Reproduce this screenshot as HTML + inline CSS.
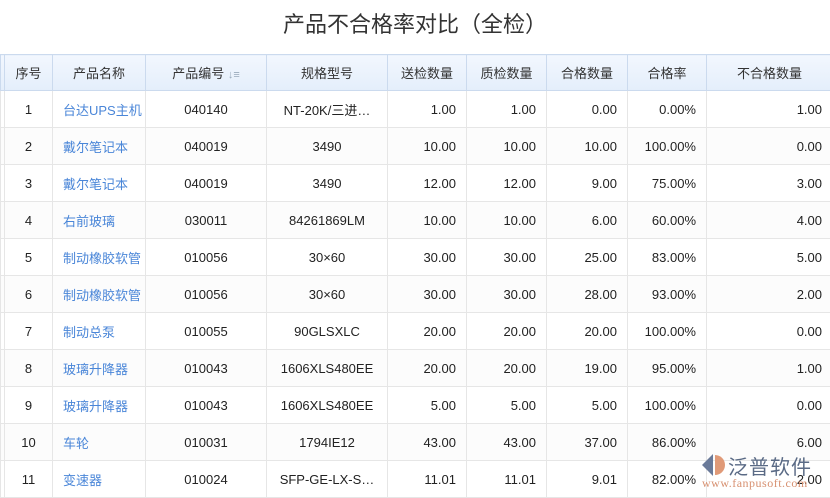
<!DOCTYPE html>
<html><head><meta charset="utf-8"><style>
body{margin:0;width:830px;height:497px;overflow:hidden;background:#fff;font-family:"Liberation Sans","Noto Sans CJK SC",sans-serif;}
h1{margin:0;height:54px;line-height:50px;text-align:center;font-size:22px;font-weight:normal;color:#333;}
table{border-collapse:collapse;table-layout:fixed;position:absolute;top:54px;left:0;width:832px;font-size:13px;color:#222;}
th{height:35px;padding:0;font-weight:normal;background:linear-gradient(#f2f7fe,#e4eefb);border:1px solid #cbdaee;color:#333;}
td{height:36px;padding:0 10px;border:1px solid #e6e6e6;white-space:nowrap;overflow:hidden;}
tr:nth-child(odd) td{background:#fcfcfc}
.c{text-align:center}.r{text-align:right}.l{color:#4a86d8;padding:0 0 0 10px;text-overflow:clip}
.logo{position:absolute;left:728px;top:451px;font-size:20px;color:#5a6a85;letter-spacing:1px}
.url{position:absolute;left:702px;top:476px;font-size:12px;color:#d79070;letter-spacing:0.5px;font-family:"Liberation Serif",serif}
</style></head><body>
<h1>产品不合格率对比（全检）</h1>
<table>
<colgroup><col style="width:4px"><col style="width:48px"><col style="width:93px"><col style="width:121px"><col style="width:121px"><col style="width:79px"><col style="width:80px"><col style="width:81px"><col style="width:79px"><col style="width:126px"></colgroup>
<tr><th></th><th>序号</th><th>产品名称</th><th>产品编号 <span style="color:#9ab;font-size:11px">↓≡</span></th><th>规格型号</th><th>送检数量</th><th>质检数量</th><th>合格数量</th><th>合格率</th><th>不合格数量</th></tr>
<tr><td></td><td class="c">1</td><td class="l">台达UPS主机</td><td class="c">040140</td><td class="c">NT-20K/三进…</td><td class="r">1.00</td><td class="r">1.00</td><td class="r">0.00</td><td class="r">0.00%</td><td class="r">1.00</td></tr>
<tr><td></td><td class="c">2</td><td class="l">戴尔笔记本</td><td class="c">040019</td><td class="c">3490</td><td class="r">10.00</td><td class="r">10.00</td><td class="r">10.00</td><td class="r">100.00%</td><td class="r">0.00</td></tr>
<tr><td></td><td class="c">3</td><td class="l">戴尔笔记本</td><td class="c">040019</td><td class="c">3490</td><td class="r">12.00</td><td class="r">12.00</td><td class="r">9.00</td><td class="r">75.00%</td><td class="r">3.00</td></tr>
<tr><td></td><td class="c">4</td><td class="l">右前玻璃</td><td class="c">030011</td><td class="c">84261869LM</td><td class="r">10.00</td><td class="r">10.00</td><td class="r">6.00</td><td class="r">60.00%</td><td class="r">4.00</td></tr>
<tr><td></td><td class="c">5</td><td class="l">制动橡胶软管</td><td class="c">010056</td><td class="c">30×60</td><td class="r">30.00</td><td class="r">30.00</td><td class="r">25.00</td><td class="r">83.00%</td><td class="r">5.00</td></tr>
<tr><td></td><td class="c">6</td><td class="l">制动橡胶软管</td><td class="c">010056</td><td class="c">30×60</td><td class="r">30.00</td><td class="r">30.00</td><td class="r">28.00</td><td class="r">93.00%</td><td class="r">2.00</td></tr>
<tr><td></td><td class="c">7</td><td class="l">制动总泵</td><td class="c">010055</td><td class="c">90GLSXLC</td><td class="r">20.00</td><td class="r">20.00</td><td class="r">20.00</td><td class="r">100.00%</td><td class="r">0.00</td></tr>
<tr><td></td><td class="c">8</td><td class="l">玻璃升降器</td><td class="c">010043</td><td class="c">1606XLS480EE</td><td class="r">20.00</td><td class="r">20.00</td><td class="r">19.00</td><td class="r">95.00%</td><td class="r">1.00</td></tr>
<tr><td></td><td class="c">9</td><td class="l">玻璃升降器</td><td class="c">010043</td><td class="c">1606XLS480EE</td><td class="r">5.00</td><td class="r">5.00</td><td class="r">5.00</td><td class="r">100.00%</td><td class="r">0.00</td></tr>
<tr><td></td><td class="c">10</td><td class="l">车轮</td><td class="c">010031</td><td class="c">1794IE12</td><td class="r">43.00</td><td class="r">43.00</td><td class="r">37.00</td><td class="r">86.00%</td><td class="r">6.00</td></tr>
<tr><td></td><td class="c">11</td><td class="l">变速器</td><td class="c">010024</td><td class="c">SFP-GE-LX-S…</td><td class="r">11.01</td><td class="r">11.01</td><td class="r">9.01</td><td class="r">82.00%</td><td class="r">2.00</td></tr>
</table>
<svg style="position:absolute;left:700px;top:452px" width="28" height="26"><path d="M13 2 L2 13 L13 24 Z" fill="#6a7a99"/><path d="M15 3 A10 10 0 0 1 15 23 Z" fill="#e09a78"/></svg>
<div class="logo">泛普软件</div>
<div class="url">www.fanpusoft.com</div>
</body></html>
